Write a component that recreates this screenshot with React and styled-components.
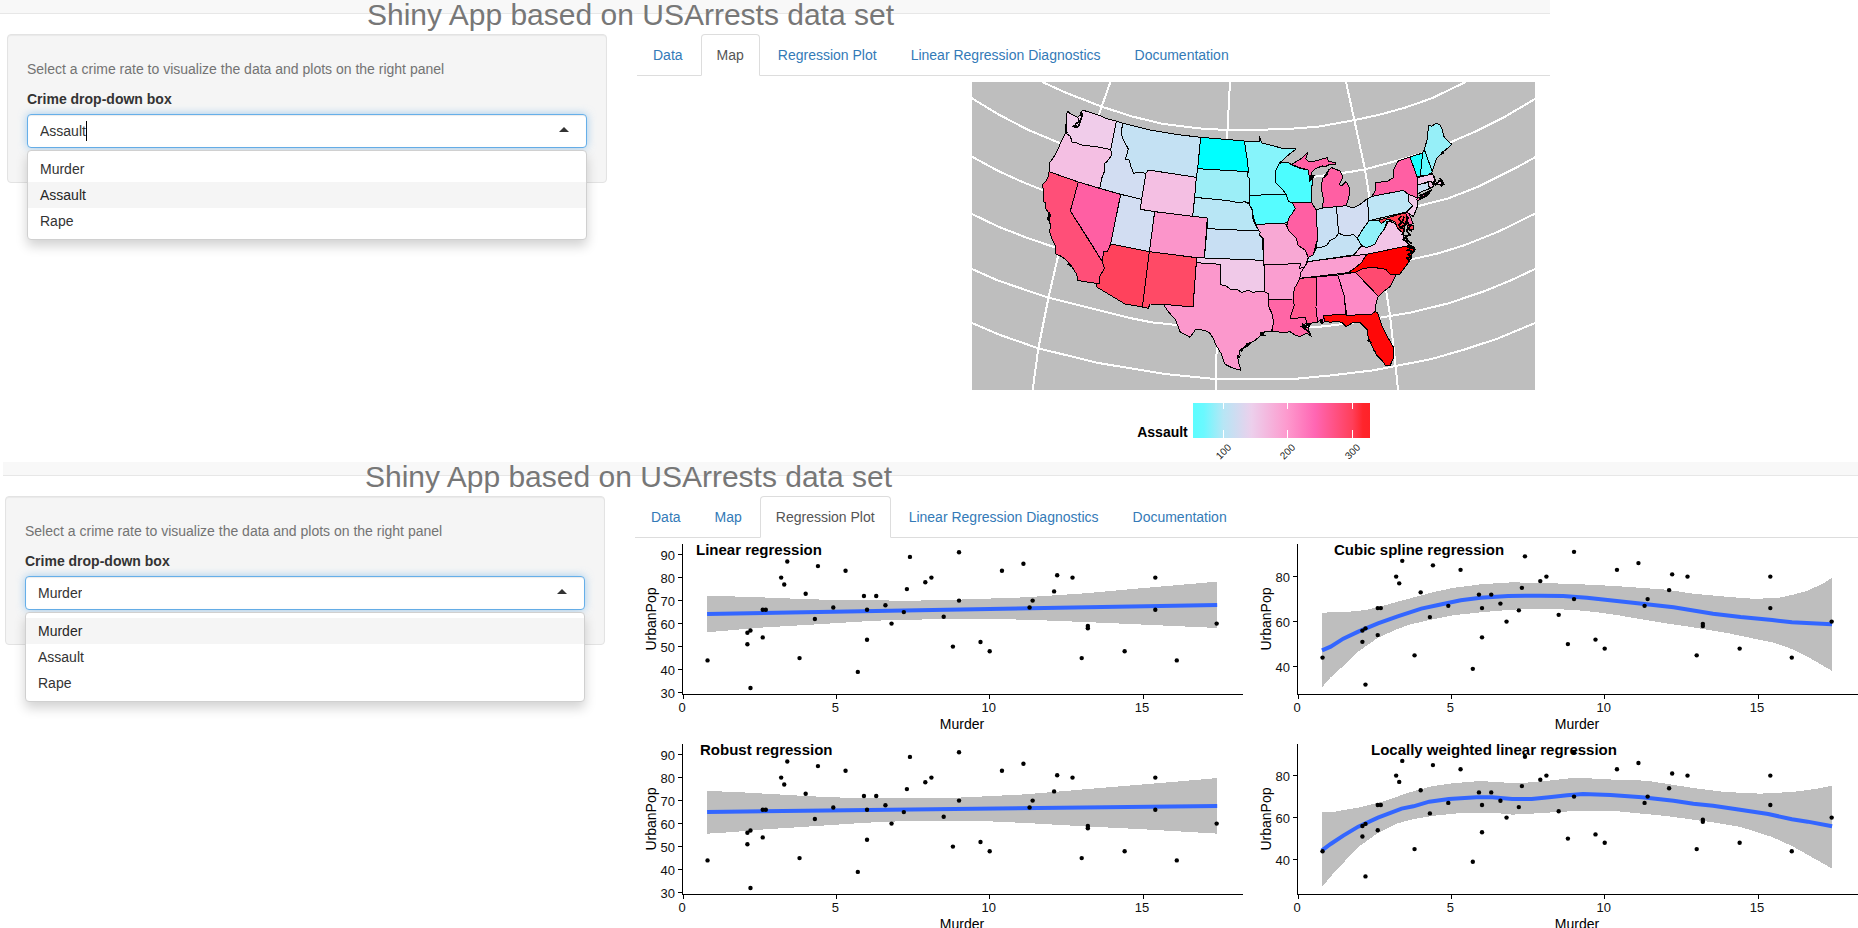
import React from "react";
import styled, { createGlobalStyle, css } from "styled-components";

const GlobalStyle = createGlobalStyle`
  *, *::before, *::after { box-sizing: border-box; }
  body {
    margin: 0;
    background: #fff;
    color: #333;
    font: 14px/20px "Liberation Sans", Arial, sans-serif;
  }
`;

const Page = styled.div`
  height: 100vh;
  overflow: hidden;
`;

const AppPanel = styled.section`
  margin-left: ${(p) => p.$offset}px;
  max-width: ${(p) => (p.$maxWidth ? `${p.$maxWidth}px` : "none")};
`;

const TopBar = styled.div`
  height: 14px;
  background: #f8f8f8;
  border-bottom: 1px solid #e7e7e7;
`;

const Inset = styled.div`
  padding-left: ${(p) => p.$left}px;
`;

const Title = styled.h2`
  position: relative;
  margin: -14px 0 0;
  padding-left: 360px;
  height: 34px;
  font-size: 30px;
  line-height: 29px;
  font-weight: 400;
  color: #777;
  white-space: nowrap;
`;

const Columns = styled.div`
  display: flex;
  align-items: flex-start;
  gap: 30px;
`;

const Well = styled.form`
  flex: 0 1 600px;
  padding: 19px;
  background: #f5f5f5;
  border: 1px solid #e3e3e3;
  border-radius: 4px;
  box-shadow: inset 0 1px 1px rgba(0, 0, 0, 0.05);
`;

const HelpText = styled.p`
  margin: 5px 0 10px;
  color: #737373;
`;

const FieldLabel = styled.label`
  display: block;
  margin-bottom: 5px;
  font-weight: 700;
`;

const Field = styled.div`
  position: relative;
  margin-bottom: 15px;
`;

const Control = styled.div`
  display: flex;
  align-items: center;
  height: 34px;
  padding: 0 17px 0 12px;
  background: #fff;
  border: 1px solid #66afe9;
  border-radius: 4px;
  box-shadow: inset 0 1px 1px rgba(0, 0, 0, 0.08), 0 0 8px rgba(102, 175, 233, 0.6);
`;

const ControlInput = styled.input`
  field-sizing: content;
  padding: 0;
  border: 0;
  outline: 0;
  background: transparent;
  color: #333;
  font: inherit;
`;

const TextCaret = styled.span`
  width: 1px;
  height: 20px;
  background: #000;
`;

const Arrow = styled.span`
  margin: 0 0 3px auto;
  border: solid transparent;
  border-width: 0 5px 5px;
  border-bottom-color: #333;
`;

const Menu = styled.ul`
  position: absolute;
  top: 36px;
  left: 0;
  right: 0;
  margin: 0;
  padding: 5px 0;
  list-style: none;
  background: #fff;
  border: 1px solid #d0d0d0;
  border-radius: 4px;
  box-shadow: 0 6px 12px rgba(0, 0, 0, 0.18);
`;

const Option = styled.button`
  display: block;
  width: 100%;
  padding: 3px 12px;
  border: 0;
  background: ${(p) => (p.$active ? "#f5f5f5" : "transparent")};
  color: ${(p) => (p.$active ? "#262626" : "#333")};
  font: inherit;
  text-align: left;
`;

const Main = styled.main`
  flex: 1 1 0;
  min-width: 0;
  overflow: hidden;
`;

const Tabs = styled.nav`
  display: flex;
  gap: 2px;
  margin-bottom: 6px;
  border-bottom: 1px solid #ddd;
`;

const Tab = styled.a`
  margin-bottom: -1px;
  padding: 10px 15px;
  border: 1px solid transparent;
  border-radius: 4px 4px 0 0;
  color: #337ab7;
  text-decoration: none;
  white-space: nowrap;
  ${(p) =>
    p.$active &&
    css`
      color: #555;
      background: #fff;
      border-color: #ddd #ddd #fff;
    `}
`;

const MapFigure = styled.figure`
  display: flex;
  flex-direction: column;
  align-items: center;
  gap: 13px;
  width: fit-content;
  margin: 0 15px 0 auto;
`;

const MapSvg = styled.svg`
  display: block;
  width: 563px;
  height: 308px;
  background: #bebebe;
`;

const Legend = styled.figcaption`
  display: flex;
  gap: 5px;
`;

const LegendTitle = styled.span`
  padding-top: 19px;
  height: 39px;
  color: #000;
  font-weight: 700;
`;

const LegendScale = styled.svg`
  display: block;
  width: 177px;
  height: 59px;
  font-size: 10px;
  overflow: visible;
`;

const PlotGrid = styled.div`
  display: grid;
  grid-template-columns: repeat(2, 615px);
  grid-auto-rows: 200px;
`;

const PlotSvg = styled.svg`
  display: block;
  width: 615px;
  height: 200px;
  font-size: 14px;
  overflow: visible;
`;

const TickText = styled.text`
  font-size: 13px;
  fill: #111;
`;

const PlotTitle = styled.text`
  font-size: 15px;
  font-weight: 700;
`;

const TAB_NAMES = ["Data", "Map", "Regression Plot", "Linear Regression Diagnostics", "Documentation"];
const CRIMES = ["Murder", "Assault", "Rape"];

const PARALLELS = [
  "232,21 300,52 410,95 500,124 590,146 700,160 785,165 955,163 1060,155 1165,136 1240,120 1320,98 1400,70 1502,21",
  "21,70 100,118 190,165 284,204 500,270 650,300 800,314 950,314 1050,305 1160,290 1200,283 1305,255 1370,235 1461,200 1535,168 1620,125 1710,72",
  "21,245 100,288 170,320 235,346 400,395 600,440 800,458 1000,452 1200,425 1365,392 1450,370 1540,335 1650,280 1710,247",
  "21,417 100,455 190,490 270,517 450,565 650,595 825,603 1000,600 1200,578 1340,553 1420,535 1500,510 1600,470 1710,416",
  "21,582 100,617 250,668 400,705 500,730 560,742 635,750 825,758 1045,757 1095,752 1170,742 1245,728 1340,712 1450,685 1560,648 1640,615 1710,582",
  "21,744 100,778 220,820 400,864 600,897 750,912 985,912 1100,901 1225,886 1292,873 1400,852 1500,823 1600,790 1710,744",
];

const MERIDIANS = [
  "436,21 410,95 345,290 280,540 250,670 220,820 203,945",
  "795,21 786,190 770,500 755,820 752,945",
  "1143,21 1168,135 1200,283 1213,365 1263,645 1275,720 1292,873 1299,945",
];

const STATES = [
  ["WA", "#f0ccea", "307,108 314,115 323,120 338,127 346,120 352,105 400,120 428,132 454,138 437,224 415,219 400,216 375,213 350,210 335,204 322,203 316,184 302,174 300,160 306,140 304,125"],
  ["OR", "#f4bfe3", "302,174 316,184 322,203 335,204 350,210 375,213 400,216 415,219 437,224 441,238 432,252 424,262 418,266 420,285 410,310 404,340 340,321 252,290 255,262 270,240 282,215 292,192"],
  ["CA", "#ff4f78", "252,290 340,321 316,408 412,560 418,580 404,605 402,626 370,622 338,616 335,598 325,582 318,570 300,552 285,542 270,536 270,510 262,495 253,468 258,452 248,430 252,415 240,398 240,382 234,380 237,350 232,330 245,315 250,305"],
  ["NV", "#ff5fa3", "340,321 404,340 467,358 437,507 428,528 416,528 412,560 375,500 316,408"],
  ["ID", "#d2ddf2", "454,138 474,145 468,170 472,188 490,222 485,240 481,252 492,255 498,275 506,295 522,292 543,295 530,373 467,358 404,340 410,310 420,285 418,266 424,262 432,252 441,238 437,224"],
  ["MT", "#c4e1f3", "474,145 560,166 640,179 707,187 698,281 694,307 550,285 543,295 522,292 506,295 498,275 492,255 481,252 485,240 490,222 472,188 468,170"],
  ["WY", "#f4bfe3", "550,285 694,307 689,367 683,424 569,410 526,403 530,373 543,295"],
  ["UT", "#d2ddf2", "467,358 530,373 526,403 569,410 553,530 437,507"],
  ["CO", "#fb95ca", "569,410 683,424 727,429 718,551 695,548 553,530"],
  ["AZ", "#ff425c", "437,507 553,530 532,696 480,687 395,636 395,627 402,626 404,605 418,580 412,560 416,528 428,528"],
  ["NM", "#ff4a66", "553,530 695,548 684,696 595,688 555,687 550,700 532,696"],
  ["ND", "#00ffff", "707,187 780,193 838,198 843,230 848,262 850,290 698,281"],
  ["SD", "#9ceef7", "698,281 850,290 846,300 855,315 853,385 840,380 820,383 790,377 689,367 694,307"],
  ["NE", "#b8e6f5", "689,367 790,377 820,383 840,380 853,388 862,405 864,432 870,448 882,468 726,461 727,429 683,424"],
  ["KS", "#c8dff3", "726,461 882,468 887,472 882,478 893,490 895,556 718,551"],
  ["OK", "#f0c9e8", "695,548 895,556 899,590 899,655 880,648 865,653 850,646 830,652 815,643 800,645 785,634 765,628 767,568 694,563"],
  ["TX", "#fb98cc", "694,563 767,568 765,628 785,634 800,645 815,643 830,652 850,646 865,653 880,648 899,650 911,657 911,695 923,720 925,745 920,768 900,770 892,778 870,796 850,806 830,822 822,830 826,842 818,848 822,868 828,886 805,880 780,868 768,835 750,805 745,790 735,775 722,767 692,762 684,775 675,787 645,770 632,735 610,710 595,688 684,696"],
  ["MN", "#86f4fb", "838,198 885,198 883,185 890,204 925,212 950,220 993,222 970,240 955,254 943,264 940,275 930,290 933,325 950,340 963,358 853,361 855,315 846,300 850,290 848,262 843,230"],
  ["IA", "#56fcff", "853,361 963,358 970,378 982,384 991,400 980,418 973,425 968,440 957,445 872,448 865,425 862,405 853,388"],
  ["WI", "#4cfdff", "943,266 955,262 970,263 985,272 1005,280 1030,285 1038,300 1034,320 1045,300 1040,340 1040,383 982,384 970,378 963,358 950,340 933,325 930,290"],
  ["MI", "#ff5fa3", "980,268 1010,250 1028,233 1022,252 1030,258 1050,258 1087,248 1090,260 1110,262 1112,268 1095,268 1085,273 1070,273 1050,282 1040,292 1035,318 1030,285 1005,278"],
  ["MI", "#ff5fa3", "1100,278 1125,288 1133,305 1130,315 1122,328 1130,333 1143,320 1152,335 1155,350 1150,372 1143,392 1114,395 1073,399 1075,370 1068,335 1073,310 1087,300 1090,285"],
  ["IL", "#ff5fa3", "982,384 1040,383 1053,405 1058,490 1050,520 1045,540 1030,547 1020,525 998,510 995,490 973,470 965,452 973,425 980,418 991,400"],
  ["IN", "#c8dff3", "1053,405 1073,399 1114,395 1121,475 1110,490 1095,496 1085,512 1070,516 1053,520 1058,490"],
  ["OH", "#d2ddf2", "1114,395 1143,392 1165,399 1185,388 1206,372 1210,405 1212,438 1195,460 1177,490 1165,478 1150,482 1135,480 1121,475"],
  ["KY", "#c4e1f3", "1121,475 1135,480 1150,482 1165,478 1177,490 1190,512 1165,540 1028,560 1030,547 1045,540 1053,520 1070,516 1085,512 1095,496 1110,490"],
  ["MO", "#f8a8d4", "872,448 957,445 965,452 973,470 995,490 998,510 1020,525 1030,547 1025,562 1018,577 1003,580 1007,566 897,569 895,490 882,478 887,472 882,468"],
  ["AR", "#fa9ed0", "897,569 1007,566 1003,580 1018,577 1008,592 1004,610 996,628 988,640 984,672 911,673 911,657 899,650 900,610"],
  ["LA", "#ff66a6", "911,673 984,672 988,690 975,730 1022,728 1025,745 1010,750 1032,758 1030,770 1040,785 1025,775 1005,785 990,780 975,770 955,773 921,768 925,745 923,720 911,695"],
  ["MS", "#ff5a90", "1004,610 1054,606 1053,700 1058,742 1025,746 1022,728 975,730 988,690 984,672 988,640 996,628"],
  ["AL", "#ff6fb8", "1054,606 1118,600 1137,660 1143,718 1075,722 1080,738 1070,746 1066,733 1058,742 1053,700"],
  ["GA", "#fd8ac6", "1118,600 1171,592 1200,622 1225,648 1240,662 1232,690 1230,710 1220,718 1145,721 1137,660"],
  ["FL", "#ff0808", "1075,722 1143,717 1145,721 1220,718 1230,710 1237,712 1250,750 1270,790 1286,818 1285,850 1275,872 1262,872 1250,855 1235,840 1220,812 1210,790 1207,765 1185,742 1165,742 1143,755 1130,742 1115,738 1095,742 1080,738"],
  ["SC", "#ff4a70", "1171,592 1195,580 1225,577 1262,583 1275,597 1293,600 1275,635 1255,650 1240,665 1225,648 1200,622"],
  ["NC", "#ff0000", "1150,593 1175,575 1205,538 1335,511 1349,525 1338,535 1340,548 1325,570 1305,597 1293,600 1275,597 1262,583 1225,577 1195,580 1171,592"],
  ["TN", "#fa9ed0", "1028,560 1165,542 1205,538 1190,562 1175,575 1150,593 1004,610 1008,592 1018,577"],
  ["VA", "#f2c4e6", "1165,542 1190,512 1205,518 1230,508 1243,482 1258,462 1270,438 1290,445 1298,460 1315,475 1318,495 1335,511 1205,538"],
  ["WV", "#90f0f9", "1212,438 1240,436 1250,445 1268,432 1280,440 1265,440 1258,462 1243,482 1230,508 1205,518 1190,512 1177,490 1195,460"],
  ["PA", "#bee5f5", "1206,372 1222,364 1315,346 1330,358 1329,378 1343,392 1325,411 1212,437 1210,405"],
  ["MD", "#ff3f50", "1240,436 1322,413 1330,450 1345,450 1345,465 1330,460 1322,440 1315,475 1298,460 1290,440 1268,432 1250,445"],
  ["DE", "#ff5f9f", "1322,413 1330,412 1345,446 1330,450"],
  ["NJ", "#f0c9e8", "1330,358 1358,366 1357,395 1345,425 1325,411 1343,392 1329,378"],
  ["NY", "#ff5fa3", "1220,366 1233,342 1230,322 1265,320 1287,307 1285,285 1300,258 1335,246 1347,280 1357,305 1356,368 1330,358 1315,346 1222,364"],
  ["NY", "#ff5fa3", "1355,372 1375,360 1395,350 1400,345 1385,364 1357,378"],
  ["VT", "#1cffff", "1335,246 1373,234 1370,262 1366,303 1356,306 1347,280"],
  ["NH", "#60faff", "1373,234 1378,224 1402,290 1390,300 1366,303 1370,262"],
  ["ME", "#96eff8", "1378,224 1386,195 1391,150 1400,154 1413,145 1425,150 1432,165 1437,185 1450,200 1461,208 1450,218 1435,230 1415,250 1408,270 1402,290"],
  ["MA", "#f2c8e8", "1356,308 1390,300 1403,296 1408,312 1414,322 1430,320 1425,312 1435,322 1425,330 1410,324 1390,320 1357,330"],
  ["CT", "#c8dff3", "1357,330 1390,322 1393,341 1370,350 1358,358"],
  ["RI", "#eec0e0", "1390,320 1400,320 1406,334 1393,341"],
];

/* Inlets, bays and barrier islands, drawn as ink over the coast. */
const COAST_DETAIL = [
  "345,112 352,118 346,140 340,154 330,154 332,146 342,140 340,128",
  "334,150 326,154 336,158 344,148",
  "304,146 302,174 308,172",
  "252,412 256,424 248,434 256,436",
  "308,566 318,574",
  "886,772 896,780 888,780 894,772",
  "842,808 856,804 850,812 836,818 828,830",
  "816,842 824,848 818,840",
  "1010,745 1020,752 1035,748 1030,758 1012,756 1020,762 1032,770 1038,782",
  "1066,738 1072,734 1068,746",
  "1207,795 1215,800 1210,792 1218,804",
  "1226,826 1232,832 1224,824",
  "1318,425 1312,440 1320,450 1308,455 1318,465 1312,478 1325,485 1314,494 1328,500",
  "1330,455 1325,468 1335,480 1322,485 1330,498 1340,505",
  "1310,422 1302,432 1310,442 1302,450 1308,462",
  "1330,425 1325,440 1336,452 1330,462 1342,470",
  "1326,515 1340,518 1328,525 1345,530 1330,538 1338,545 1325,550 1335,560 1328,545",
  "1332,510 1345,516 1350,524 1340,536",
  "1405,300 1410,315 1404,325 1412,330 1418,322",
  "1424,310 1432,318 1436,328 1428,334 1434,322 1420,318",
  "1362,362 1380,356 1398,346 1376,366 1362,370",
  "1435,230 1428,238 1438,232",
  "1036,300 1042,306 1048,300 1036,316",
  "1070,273 1080,275 1095,268",
  "1085,300 1088,290 1080,304",
];

const GRADIENT = [
  [0, "#5cfdff"],
  [6, "#6af9ff"],
  [17, "#b6e6f5"],
  [33, "#ecd0ec"],
  [53, "#fd9ace"],
  [69, "#ff66b3"],
  [90, "#ff3f5a"],
  [96, "#ff252c"],
  [100, "#ff2228"],
];

/* [murder arrests, urban population] for the fifty states */
const ARRESTS = [
  [13.2, 58], [10, 48], [8.1, 80], [8.8, 50], [9, 91], [7.9, 78], [3.3, 77], [5.9, 72], [15.4, 80], [17.4, 60],
  [5.3, 83], [2.6, 54], [10.4, 83], [7.2, 65], [2.2, 57], [6, 66], [9.7, 52], [15.4, 66], [2.1, 51], [11.3, 67],
  [4.4, 85], [12.1, 74], [2.7, 66], [16.1, 44], [9, 70], [6, 53], [4.3, 62], [12.2, 81], [2.1, 56], [7.4, 89],
  [11.4, 70], [11.1, 86], [13, 45], [0.8, 44], [7.3, 75], [6.6, 68], [4.9, 67], [6.3, 72], [3.4, 87], [14.4, 48],
  [3.8, 45], [13.2, 59], [12.7, 80], [3.2, 80], [2.2, 32], [8.5, 63], [4, 73], [5.7, 39], [2.6, 66], [6.8, 60],
];

const LEFT_X = 0.3954;
const RIGHT_X = 0.3942;

const PLOTS = [
  {
    title: "Linear regression",
    titleX: 61,
    ticks: [30, 40, 50, 60, 70, 80, 90],
    base: 148.6 + 2.3 * 30,
    scale: 2.3,
    axisEnd: 608,
    transform: `translate(-5 -64) scale(${LEFT_X} 0.3333)`,
    band: "195,347 330,352 457,358 570,361 720,362 830,359 1000,352 1150,340 1300,324 1485,305 1485,444 1300,434 1150,426 1000,419 830,416 620,422 460,434 330,443 195,457",
    line: "195,402 1485,375",
  },
  {
    title: "Cubic spline regression",
    titleX: 84,
    ticks: [40, 60, 80],
    base: 122.6 + 2.25 * 40,
    scale: 2.25,
    axisEnd: 615,
    transform: `translate(-10 -64) scale(${RIGHT_X} 0.3333)`,
    band: "208,398 270,396 320,390 370,375 410,362 460,346 500,334 540,324 610,313 690,307 760,309 850,312 950,318 1080,329 1150,341 1240,351 1300,356 1360,355 1400,345 1440,332 1480,310 1502,293 1502,573 1450,537 1400,507 1350,487 1300,475 1240,460 1150,442 1080,430 950,404 900,396 850,390 770,386 690,389 610,397 540,406 480,420 430,434 400,447 350,473 300,515 262,558 230,592 208,622",
    line: "208,511 230,500 262,476 300,455 350,430 400,409 460,386 500,376 560,361 610,353 680,348 760,347 820,348 880,353 950,362 1020,371 1100,382 1200,401 1270,411 1350,420 1400,427 1450,430 1502,433",
  },
  {
    title: "Robust regression",
    titleX: 65,
    ticks: [30, 40, 50, 60, 70, 80, 90],
    base: 148.6 + 2.3 * 30,
    scale: 2.3,
    axisEnd: 608,
    transform: `translate(-5 -14) scale(${LEFT_X} 0.3333)`,
    band: "195,183 270,186 370,193 460,199 560,204 660,205 810,204 900,199 1000,193 1150,178 1300,163 1420,151 1485,144 1485,311 1300,298 1150,289 1000,279 870,272 700,273 600,278 460,289 330,299 250,307 195,311",
    line: "195,246 1485,228",
  },
  {
    title: "Locally weighted linear regression",
    titleX: 121,
    ticks: [40, 60, 80],
    base: 115.6 + 2.1 * 40,
    scale: 2.1,
    axisEnd: 615,
    transform: `translate(-10 -14) scale(${RIGHT_X} 0.3333)`,
    band: "208,246 240,245 300,233 370,212 430,187 490,168 540,160 610,153 700,160 760,155 850,143 900,146 950,149 1030,152 1080,161 1150,174 1230,186 1320,191 1400,186 1460,177 1502,167 1502,416 1450,381 1400,348 1350,321 1270,291 1200,277 1080,258 950,243 850,243 740,251 690,254 650,249 570,248 500,256 440,267 400,280 350,309 300,351 240,426 208,471",
    line: "208,361 230,342 262,317 300,290 350,263 410,236 440,229 480,215 530,207 600,202 640,202 690,207 740,207 790,201 830,196 870,192 940,195 1020,202 1100,212 1150,221 1200,227 1260,238 1340,252 1400,268 1440,275 1502,289",
  },
];

function ArrestMap() {
  return (
    <MapSvg viewBox="21 21 1689 924" role="img" aria-label="Assault arrests by state" shapeRendering="crispEdges">
      <g fill="none" stroke="#fff" strokeWidth="6">
        {[...PARALLELS, ...MERIDIANS].map((points) => (
          <polyline key={points} points={points} />
        ))}
      </g>
      <g stroke="#000" strokeWidth="3" strokeLinejoin="round">
        {STATES.map(([name, fill, points]) => (
          <polygon key={name + points} fill={fill} points={points} />
        ))}
      </g>
      <g fill="none" stroke="#000" strokeWidth="5">
        {COAST_DETAIL.map((points) => (
          <polyline key={points} points={points} />
        ))}
      </g>
    </MapSvg>
  );
}

function MapLegend() {
  return (
    <Legend>
      <LegendTitle>Assault</LegendTitle>
      <LegendScale viewBox="0 0 177 59" aria-hidden="true">
        <defs>
          <linearGradient id="assault-scale">
            {GRADIENT.map(([at, color]) => (
              <stop key={at} offset={`${at}%`} stopColor={color} />
            ))}
          </linearGradient>
        </defs>
        <rect width="177" height="35" fill="url(#assault-scale)" />
        {[
          [30, 100],
          [94, 200],
          [159, 300],
        ].map(([x, value]) => (
          <g key={value}>
            <path d={`M${x + 0.5} 0v6M${x + 0.5} 27v8`} stroke="#fff" />
            <text transform={`translate(${x + 3} 51) rotate(-45)`} textAnchor="middle" fill="#222">
              {value}
            </text>
          </g>
        ))}
      </LegendScale>
    </Legend>
  );
}

function RegressionPlot({ title, titleX, ticks, base, scale, axisEnd, transform, band, line }) {
  const px = (v) => 48 + v * 30.67;
  const py = (v) => base - v * scale;
  return (
    <PlotSvg viewBox="0 0 615 200" role="img" aria-label={title}>
      <g transform={transform}>
        <polygon points={band} fill="#bebebe" shapeRendering="crispEdges" />
        <polyline points={line} fill="none" stroke="#3366ff" strokeWidth="4" vectorEffect="non-scaling-stroke" />
      </g>
      {ARRESTS.map(([murder, urban], i) => (
        <circle key={i} cx={px(murder)} cy={py(urban)} r="2.2" />
      ))}
      <g stroke="#000" shapeRendering="crispEdges">
        <path d={`M47.5 0V150.5H${axisEnd}`} fill="none" />
        {ticks.map((v) => (
          <path key={v} d={`M43 ${py(v)}h4`} />
        ))}
        {[0, 5, 10, 15].map((v) => (
          <path key={v} d={`M${px(v)} 151v4`} />
        ))}
      </g>
      {ticks.map((v) => (
        <TickText key={v} x="40" y={py(v) + 5} textAnchor="end">
          {v}
        </TickText>
      ))}
      {[0, 5, 10, 15].map((v) => (
        <TickText key={v} x={px(v) - 1} y="168" textAnchor="middle">
          {v}
        </TickText>
      ))}
      <text x="327" y="185" textAnchor="middle">
        Murder
      </text>
      <text transform="translate(21 75) rotate(-90)" textAnchor="middle">
        UrbanPop
      </text>
      <PlotTitle x={titleX} y="11">
        {title}
      </PlotTitle>
    </PlotSvg>
  );
}

function ShinyApp({ id, crime, typing, tab, offset, inset, maxWidth, children }) {
  return (
    <AppPanel $offset={offset} $maxWidth={maxWidth}>
      <TopBar />
      <Inset $left={inset}>
        <Title>Shiny App based on USArrests data set</Title>
        <Columns>
          <Well>
            <HelpText>Select a crime rate to visualize the data and plots on the right panel</HelpText>
            <FieldLabel htmlFor={id}>Crime drop-down box</FieldLabel>
            <Field>
              <Control>
                <ControlInput id={id} role="combobox" aria-expanded="true" aria-controls={`${id}-menu`} defaultValue={crime} />
                {typing && <TextCaret />}
                <Arrow />
              </Control>
              <Menu id={`${id}-menu`}>
                {CRIMES.map((name) => (
                  <li key={name}>
                    <Option type="button" $active={name === crime}>
                      {name}
                    </Option>
                  </li>
                ))}
              </Menu>
            </Field>
          </Well>
          <Main>
            <Tabs>
              {TAB_NAMES.map((name) => (
                <Tab key={name} href="#" $active={name === tab}>
                  {name}
                </Tab>
              ))}
            </Tabs>
            {children}
          </Main>
        </Columns>
      </Inset>
    </AppPanel>
  );
}

export default function App() {
  return (
    <Page>
      <GlobalStyle />
      <ShinyApp id="crime-map" crime="Assault" typing tab="Map" offset={0} inset={7} maxWidth={1550}>
        <MapFigure>
          <ArrestMap />
          <MapLegend />
        </MapFigure>
      </ShinyApp>
      <ShinyApp id="crime-plots" crime="Murder" tab="Regression Plot" offset={3} inset={2}>
        <PlotGrid>
          {PLOTS.map((plot) => (
            <RegressionPlot key={plot.title} {...plot} />
          ))}
        </PlotGrid>
      </ShinyApp>
    </Page>
  );
}
